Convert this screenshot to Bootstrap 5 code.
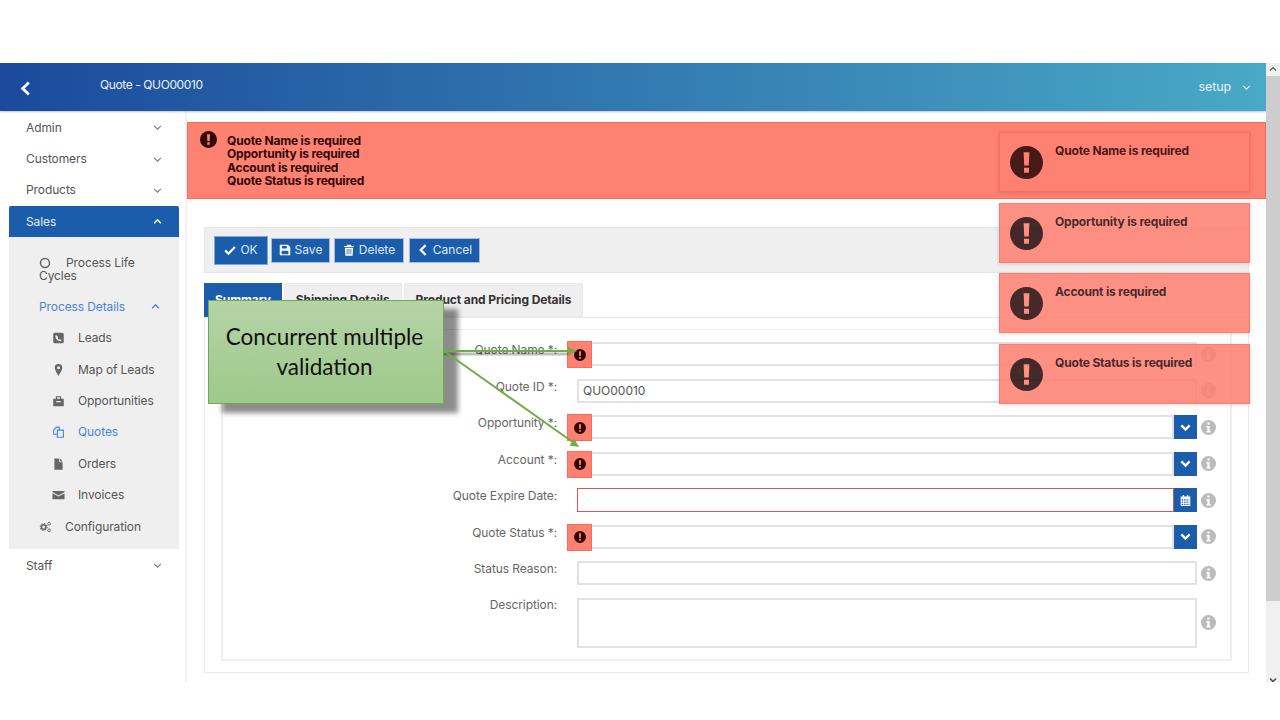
<!DOCTYPE html>
<html lang="en">
<head>
  <meta charset="UTF-8" />
  <title>Quote - QUO00010</title>
  <link href="https://cdn.jsdelivr.net/npm/bootstrap@5.3.3/dist/css/bootstrap.min.css" rel="stylesheet">
  <style>
    body { background: #fff; font-family: Inter, "Liberation Sans", sans-serif; font-size: 12px; letter-spacing: -.1px; color: #555; overflow: hidden; height: 720px; position: relative; }
    .ico { width: 1em; height: 1em; fill: currentColor; flex: none; display: inline-block; }
    .app-frame { margin-top: 63px; height: 619px; overflow: hidden; position: relative; padding-right: 14px; }
    .top-bar { height: 48px; background: linear-gradient(to right, #1b4a9c, #49a9c6); color: #e8f1f8; box-shadow: 0 1px 2px rgba(0,0,0,.25); position: relative; padding: 0 15px 0 18px; }
    .back-btn { font-size: 15px; width: 82px; color: #fff; margin-top: 2px; }
    .page-title { margin-top: -4px; letter-spacing: -.4px; }
    .setup-menu { margin-top: 1px; gap: 11px; font-size: 12.5px; }
    .setup-menu .ico { font-size: 9px; }
    .app-body { height: 571px; }
    .side-menu { width: 187px; flex: none; border-right: 2px solid #f3f3f3; padding: 1px 6px 0 9px; }
    .menu-item { height: 31.4px; padding: 0 17px; color: #555; }
    .menu-item .ico { font-size: 9px; color: #777; }
    .menu-open { background: #efefef; }
    .menu-head { background: #1c5dab; color: #e4eef8; border-radius: 2px 2px 0 0; height: 31px; }
    .menu-head .ico { color: #fff; }
    .menu-sub { padding: 15px 0 7px; }
    .sub-item { height: 31.4px; padding: 0 17px 0 43px; color: #555; gap: 13px; }
    .sub-item .ico { font-size: 12px; color: #666; width: 13px; }
    .sub-wrap { display: block; height: auto; padding: 4px 17px 4px 30px; line-height: 13px; color: #555; margin-bottom: 5px; }
    .sub-wrap .ico { font-size: 12px; color: #666; margin: 0 15px 0 0; vertical-align: -2px; }
    .sub-top { padding-left: 30px; }
    .sub-top .ico { width: 13px; }
    .sub-active { color: #4b83dc; }
    .sub-active .ico { color: #4b83dc; }
    .staff-item { margin-top: 1px; }
    .content-pane { flex: 1; min-width: 0; }
    .error-bar { height: 77px; margin-top: 11px; background: #ff8172; border: 1px solid #ff6a58; color: #2e0705; font-weight: 700; letter-spacing: -.17px; line-height: 13.35px; padding: 11px 0 0 12px; gap: 10px; }
    .error-bar .ico { font-size: 17px; margin-top: -3px; }
    .pane-inner { padding: 28px 17px 0; }
    .action-bar { height: 46px; background: #efefef; border: 1px solid #e6e6e6; padding-left: 10px; gap: 4px; }
    .action-btn { --bs-btn-padding-y: 0; --bs-btn-padding-x: 0; --bs-btn-font-size: 12px; --bs-btn-border-radius: 0; height: 25px; display: inline-flex; align-items: center; justify-content: center; gap: 4px; background: #1c5dab; border-color: #9fc0e0; color: #dce9f5; }
    .action-btn .ico { font-size: 12px; color: #fff; }
    .action-focus { height: 27px; width: 52px; outline: 1px solid #7ea9d6; border-color: #1c5dab; }
    .btn-save { width: 59px; }
    .btn-delete { width: 70px; }
    .btn-cancel { width: 71px; margin-left: 1px; }
    .tab-strip { border: 0; margin-top: 10px; gap: 2px; height: 34px; }
    .tab-strip .nav-link { height: 34px; border: 1px solid #eaeaea; border-radius: 0; background: #efefef; color: #333; font-weight: 700; padding: 0 11px; display: flex; align-items: center; }
    .tab-strip .nav-link.active { background: #1c5dab; border-color: #1c5dab; color: #fff; padding: 0 10px; }
    .tab-panel { border: 1px solid #e9e9e9; padding: 11px 16px 12px; height: 356px; }
    .form-box { border: 2px solid #efefef; border-top-width: 1px; height: 332px; padding: 12.3px 0 0; }
    .field-line { height: 24px; margin-bottom: 12.5px; }
    .field-label { width: 334px; text-align: right; margin-right: 20px; flex: none; margin-top: -8.5px; color: #666; }
    .field-input { width: 620px; flex: none; position: relative; height: 100%; }
    .field-input .form-control { height: 24px; min-height: 0; border: 2px solid #e2e2e2; border-radius: 0; padding: 0 4px; font-size: 12px; color: #555; }
    .field-input .input-group-text { width: 23px; height: 24px; padding: 0; border: 1px solid #1c5dab; border-radius: 0; background: #1c5dab; color: #fff; justify-content: center; margin-left: 0 !important; }
    .field-input .input-group-text .ico { font-size: 11px; }
    .form-control.field-bad { border: 1px solid #cc5a5a; }
    .field-tall { height: 50px; margin-bottom: 0; }
    .field-tall .form-control { height: 50px; resize: none; }
    .field-tall .field-label { align-self: flex-start; margin-top: -2px; }
    .info-ico { font-size: 15px; color: #bbb; margin-left: 4px; }
    .err-badge { position: absolute; left: -10px; top: -1px; width: 25px; height: 27px; background: #ff8172; border: 1px solid #ff6a58; display: flex; align-items: center; justify-content: center; color: #2e0705; z-index: 5; }
    .err-badge .ico { font-size: 12px; }
    .toast-stack { position: absolute; left: 999px; top: 132px; width: 251px; gap: 10.6px; z-index: 30; }
    .err-toast { height: 60px; background: #ff8172; border: 1px solid #ff6a58; opacity: .87; box-shadow: 0 1px 4px rgba(0,0,0,.15); padding: 9px 10px 0 55px; position: relative; font-weight: 700; letter-spacing: -.17px; color: #2b0b0b; }
    .err-toast .ico { position: absolute; left: 10px; top: 13px; font-size: 33px; }
    .callout { position: absolute; left: 208px; top: 300px; width: 236px; height: 104px; background: linear-gradient(to bottom, #b5d3a7, #9ec98a); border: 1px solid #71a850; box-shadow: 14px 9px 5px rgba(0,0,0,.45); font-family: Lato, "Liberation Sans", sans-serif; font-size: 22.5px; letter-spacing: 0; line-height: 30px; color: #111; text-align: center; padding: 21px 12px 0 9px; z-index: 20; }
    .arrow-layer { position: absolute; left: 0; top: 0; z-index: 21; pointer-events: none; }
    .scroll-rail { position: absolute; right: 0; top: 0; bottom: 0; width: 14px; background: #f0f0f0; color: #555; }
    .scroll-thumb { position: absolute; left: 0; right: 0; top: 13px; height: 525px; background: #cdcdcd; }
    .scroll-btn { position: absolute; left: 3px; font-size: 8px; }
    .scroll-up { top: 2px; }
    .scroll-down { bottom: -2px; }
  </style>
</head>
<body>

<svg width="0" height="0" class="position-absolute">
  <defs>
    <symbol id="i-down" viewBox="0 0 16 16"><path d="M2 5l6 6 6-6" fill="none" stroke="currentColor" stroke-width="1.8"/></symbol>
    <symbol id="i-down-b" viewBox="0 0 16 16"><path d="M2 5l6 6 6-6" fill="none" stroke="currentColor" stroke-width="3.4"/></symbol>
    <symbol id="i-up" viewBox="0 0 16 16"><path d="M2 11l6-6 6 6" fill="none" stroke="currentColor" stroke-width="2.4"/></symbol>
    <symbol id="i-left" viewBox="0 0 16 16"><path d="M11.5 1.5L5 8l6.5 6.5" fill="none" stroke="currentColor" stroke-width="3"/></symbol>
    <symbol id="i-excl" viewBox="0 0 16 16"><path fill-rule="evenodd" d="M8 0a8 8 0 1 0 0 16A8 8 0 0 0 8 0zM6.600 3h2.800l-.3 6.400H6.900zM6.800 10.600h2.400V13H6.800z"/></symbol>
    <symbol id="i-info" viewBox="0 0 16 16"><path fill-rule="evenodd" d="M8 0a8 8 0 1 0 0 16A8 8 0 0 0 8 0zM6.800 2.700h2.400v2.200H6.800zM5.800 6.300h3.400v5.400h1v1.600H5.800v-1.600h1V7.900h-1z"/></symbol>
    <symbol id="i-circle" viewBox="0 0 16 16"><circle cx="8" cy="8" r="6" fill="none" stroke="currentColor" stroke-width="2"/></symbol>
    <symbol id="i-phone" viewBox="0 0 16 16"><path fill-rule="evenodd" d="M3 1h10a2 2 0 0 1 2 2v10a2 2 0 0 1-2 2H3a2 2 0 0 1-2-2V3a2 2 0 0 1 2-2zm2 3L3.800 5c0 4 3 7.200 7.200 7.200l1-1.200-2.200-1.600-1 .8c-1-.5-1.600-1.200-2-2.200l.9-1z"/></symbol>
    <symbol id="i-pin" viewBox="0 0 16 16"><path fill-rule="evenodd" d="M8 0a5 5 0 0 1 5 5c0 3-3.500 8-5 11-1.500-3-5-8-5-11a5 5 0 0 1 5-5zm0 3a2 2 0 1 0 0 4 2 2 0 0 0 0-4z"/></symbol>
    <symbol id="i-case" viewBox="0 0 16 16"><path fill-rule="evenodd" d="M4.500 5V1.500h7V5H15v10H1V5zm1.500 0h4V3H6zM5 8v1.500h6V8z"/></symbol>
    <symbol id="i-copy" viewBox="0 0 16 16"><path fill="none" stroke="currentColor" stroke-width="1.500" d="M6 11H1.500V5.500L5.500 1.500H9v3M6.500 5.500h8v9.500h-8z"/></symbol>
    <symbol id="i-file" viewBox="0 0 16 16"><path d="M2.500 0.500H9V5.500h4.500V15.500h-11zM10 .5l3.500 4H10z"/></symbol>
    <symbol id="i-mail" viewBox="0 0 16 16"><path d="M0 2.500h16v1.500L8 8.500 0 4zM0 5.500L8 10l8-4.500v8H0z"/></symbol>
    <symbol id="i-cogs" viewBox="0 0 16 16"><circle cx="5.500" cy="8" r="3" fill="none" stroke="currentColor" stroke-width="2"/><circle cx="5.500" cy="8" r="4.600" fill="none" stroke="currentColor" stroke-width="1.400" stroke-dasharray="1.800 1.800"/><circle cx="12.800" cy="3.600" r="1.800" fill="none" stroke="currentColor" stroke-width="1.300"/><circle cx="12.800" cy="12.400" r="1.800" fill="none" stroke="currentColor" stroke-width="1.300"/></symbol>
    <symbol id="i-check" viewBox="0 0 16 16"><path d="M1.500 8.500L6 13l8.500-9" fill="none" stroke="currentColor" stroke-width="3"/></symbol>
    <symbol id="i-save" viewBox="0 0 16 16"><path fill-rule="evenodd" d="M1 1h11l3 3v11H1zm3 1.500V6h6.500V2.500zM3.500 9v4.500h9V9z"/></symbol>
    <symbol id="i-trash" viewBox="0 0 16 16"><path fill-rule="evenodd" d="M5.500 1h5l.8 1.500H14.500V4h-13V2.500h3.200zM2.500 5h11l-.7 10.500H3.200zM5 6.500v7h1v-7zm2.500 0v7h1v-7zm2.500 0v7h1v-7z"/></symbol>
    <symbol id="i-cal" viewBox="0 0 16 16"><path fill-rule="evenodd" d="M4 0h2v2h4V0h2v2h3v14H1V2h3zM2.500 6v2h2.200V6zm3.500 0v2h2V6zm3.300 0v2h2V6zm3.300 0v2h1V6zM2.500 9.300v2h2.200v-2zm3.500 0v2h2v-2zm3.300 0v2h2v-2zm3.300 0v2h1v-2zM2.500 12.600v2h2.200v-2zm3.500 0v2h2v-2zm3.300 0v2h2v-2zm3.300 0v2h1v-2z"/></symbol>
  </defs>
</svg>

<div class="app-frame">
  <header class="top-bar d-flex align-items-center justify-content-between">
    <div class="d-flex align-items-center">
      <span class="back-btn d-flex"><svg class="ico"><use href="#i-left"/></svg></span>
      <span class="page-title">Quote - QUO00010</span>
    </div>
    <div class="setup-menu d-flex align-items-center">setup <svg class="ico"><use href="#i-down"/></svg></div>
  </header>

  <div class="app-body d-flex">
    <aside class="side-menu">
      <div class="menu-item d-flex align-items-center justify-content-between">Admin <svg class="ico"><use href="#i-down"/></svg></div>
      <div class="menu-item d-flex align-items-center justify-content-between">Customers <svg class="ico"><use href="#i-down"/></svg></div>
      <div class="menu-item d-flex align-items-center justify-content-between">Products <svg class="ico"><use href="#i-down"/></svg></div>
      <div class="menu-open">
        <div class="menu-item menu-head d-flex align-items-center justify-content-between">Sales <svg class="ico"><use href="#i-up"/></svg></div>
        <div class="menu-sub">
          <div class="sub-wrap"><svg class="ico"><use href="#i-circle"/></svg>Process Life Cycles</div>
          <div class="menu-item sub-active d-flex align-items-center justify-content-between sub-top">Process Details <svg class="ico"><use href="#i-up"/></svg></div>
          <div class="sub-item d-flex align-items-center"><svg class="ico"><use href="#i-phone"/></svg>Leads</div>
          <div class="sub-item d-flex align-items-center"><svg class="ico"><use href="#i-pin"/></svg>Map of Leads</div>
          <div class="sub-item d-flex align-items-center"><svg class="ico"><use href="#i-case"/></svg>Opportunities</div>
          <div class="sub-item sub-active d-flex align-items-center"><svg class="ico"><use href="#i-copy"/></svg>Quotes</div>
          <div class="sub-item d-flex align-items-center"><svg class="ico"><use href="#i-file"/></svg>Orders</div>
          <div class="sub-item d-flex align-items-center"><svg class="ico"><use href="#i-mail"/></svg>Invoices</div>
          <div class="sub-item d-flex align-items-center sub-top"><svg class="ico"><use href="#i-cogs"/></svg>Configuration</div>
        </div>
      </div>
      <div class="menu-item staff-item d-flex align-items-center justify-content-between">Staff <svg class="ico"><use href="#i-down"/></svg></div>
    </aside>

    <main class="content-pane">
      <div class="error-bar d-flex">
        <svg class="ico"><use href="#i-excl"/></svg>
        <div>Quote Name is required<br>Opportunity is required<br>Account is required<br>Quote Status is required</div>
      </div>
      <div class="pane-inner">
        <div class="action-bar d-flex align-items-center">
          <button class="btn action-btn action-focus"><svg class="ico"><use href="#i-check"/></svg>OK</button>
          <button class="btn action-btn btn-save"><svg class="ico"><use href="#i-save"/></svg>Save</button>
          <button class="btn action-btn btn-delete"><svg class="ico"><use href="#i-trash"/></svg>Delete</button>
          <button class="btn action-btn btn-cancel"><svg class="ico"><use href="#i-left"/></svg>Cancel</button>
        </div>
        <ul class="nav nav-tabs tab-strip">
          <li class="nav-item"><a class="nav-link active" href="#">Summary</a></li>
          <li class="nav-item"><a class="nav-link" href="#">Shipping Details</a></li>
          <li class="nav-item"><a class="nav-link" href="#">Product and Pricing Details</a></li>
        </ul>
        <div class="tab-panel">
          <div class="form-box">
            <div class="field-line d-flex align-items-center">
              <label class="field-label">Quote Name *:</label>
              <div class="field-input"><span class="err-badge"><svg class="ico"><use href="#i-excl"/></svg></span><input class="form-control"></div>
              <svg class="ico info-ico"><use href="#i-info"/></svg>
            </div>
            <div class="field-line d-flex align-items-center">
              <label class="field-label">Quote ID *:</label>
              <div class="field-input"><input class="form-control" value="QUO00010"></div>
              <svg class="ico info-ico"><use href="#i-info"/></svg>
            </div>
            <div class="field-line d-flex align-items-center">
              <label class="field-label">Opportunity *:</label>
              <div class="field-input input-group flex-nowrap"><span class="err-badge"><svg class="ico"><use href="#i-excl"/></svg></span><input class="form-control"><span class="input-group-text"><svg class="ico"><use href="#i-down-b"/></svg></span></div>
              <svg class="ico info-ico"><use href="#i-info"/></svg>
            </div>
            <div class="field-line d-flex align-items-center">
              <label class="field-label">Account *:</label>
              <div class="field-input input-group flex-nowrap"><span class="err-badge"><svg class="ico"><use href="#i-excl"/></svg></span><input class="form-control"><span class="input-group-text"><svg class="ico"><use href="#i-down-b"/></svg></span></div>
              <svg class="ico info-ico"><use href="#i-info"/></svg>
            </div>
            <div class="field-line d-flex align-items-center">
              <label class="field-label">Quote Expire Date:</label>
              <div class="field-input input-group flex-nowrap"><input class="form-control field-bad"><span class="input-group-text"><svg class="ico"><use href="#i-cal"/></svg></span></div>
              <svg class="ico info-ico"><use href="#i-info"/></svg>
            </div>
            <div class="field-line d-flex align-items-center">
              <label class="field-label">Quote Status *:</label>
              <div class="field-input input-group flex-nowrap"><span class="err-badge"><svg class="ico"><use href="#i-excl"/></svg></span><input class="form-control"><span class="input-group-text"><svg class="ico"><use href="#i-down-b"/></svg></span></div>
              <svg class="ico info-ico"><use href="#i-info"/></svg>
            </div>
            <div class="field-line d-flex align-items-center">
              <label class="field-label">Status Reason:</label>
              <div class="field-input"><input class="form-control"></div>
              <svg class="ico info-ico"><use href="#i-info"/></svg>
            </div>
            <div class="field-line field-tall d-flex align-items-center">
              <label class="field-label">Description:</label>
              <div class="field-input"><textarea class="form-control"></textarea></div>
              <svg class="ico info-ico"><use href="#i-info"/></svg>
            </div>
          </div>
        </div>
      </div>
    </main>
  </div>

  <div class="scroll-rail">
    <svg class="ico scroll-btn scroll-up"><use href="#i-up"/></svg>
    <div class="scroll-thumb"></div>
    <svg class="ico scroll-btn scroll-down"><use href="#i-down-b"/></svg>
  </div>
</div>

<div class="toast-stack d-flex flex-column">
  <div class="err-toast"><svg class="ico"><use href="#i-excl"/></svg>Quote Name is required</div>
  <div class="err-toast"><svg class="ico"><use href="#i-excl"/></svg>Opportunity is required</div>
  <div class="err-toast"><svg class="ico"><use href="#i-excl"/></svg>Account is required</div>
  <div class="err-toast"><svg class="ico"><use href="#i-excl"/></svg>Quote Status is required</div>
</div>

<div class="callout">Concurrent multiple validation</div>

<svg class="arrow-layer" width="1280" height="720" viewBox="0 0 1280 720">
  <path d="M444 352H570" stroke="#000" stroke-opacity=".25" stroke-width="3" fill="none" transform="translate(0 2)"/>
  <path d="M444 351H572" stroke="#70ad47" stroke-width="2" fill="none"/>
  <path d="M577 351l-9-4v8z" fill="#70ad47"/>
  <path d="M444 351L574 443" stroke="#70ad47" stroke-width="2" fill="none"/>
  <path d="M579 447l-9.500-1.500 4.800-6.800z" fill="#70ad47"/>
</svg>

<script src="https://cdn.jsdelivr.net/npm/bootstrap@5.3.3/dist/js/bootstrap.bundle.min.js"></script>
</body>
</html>
